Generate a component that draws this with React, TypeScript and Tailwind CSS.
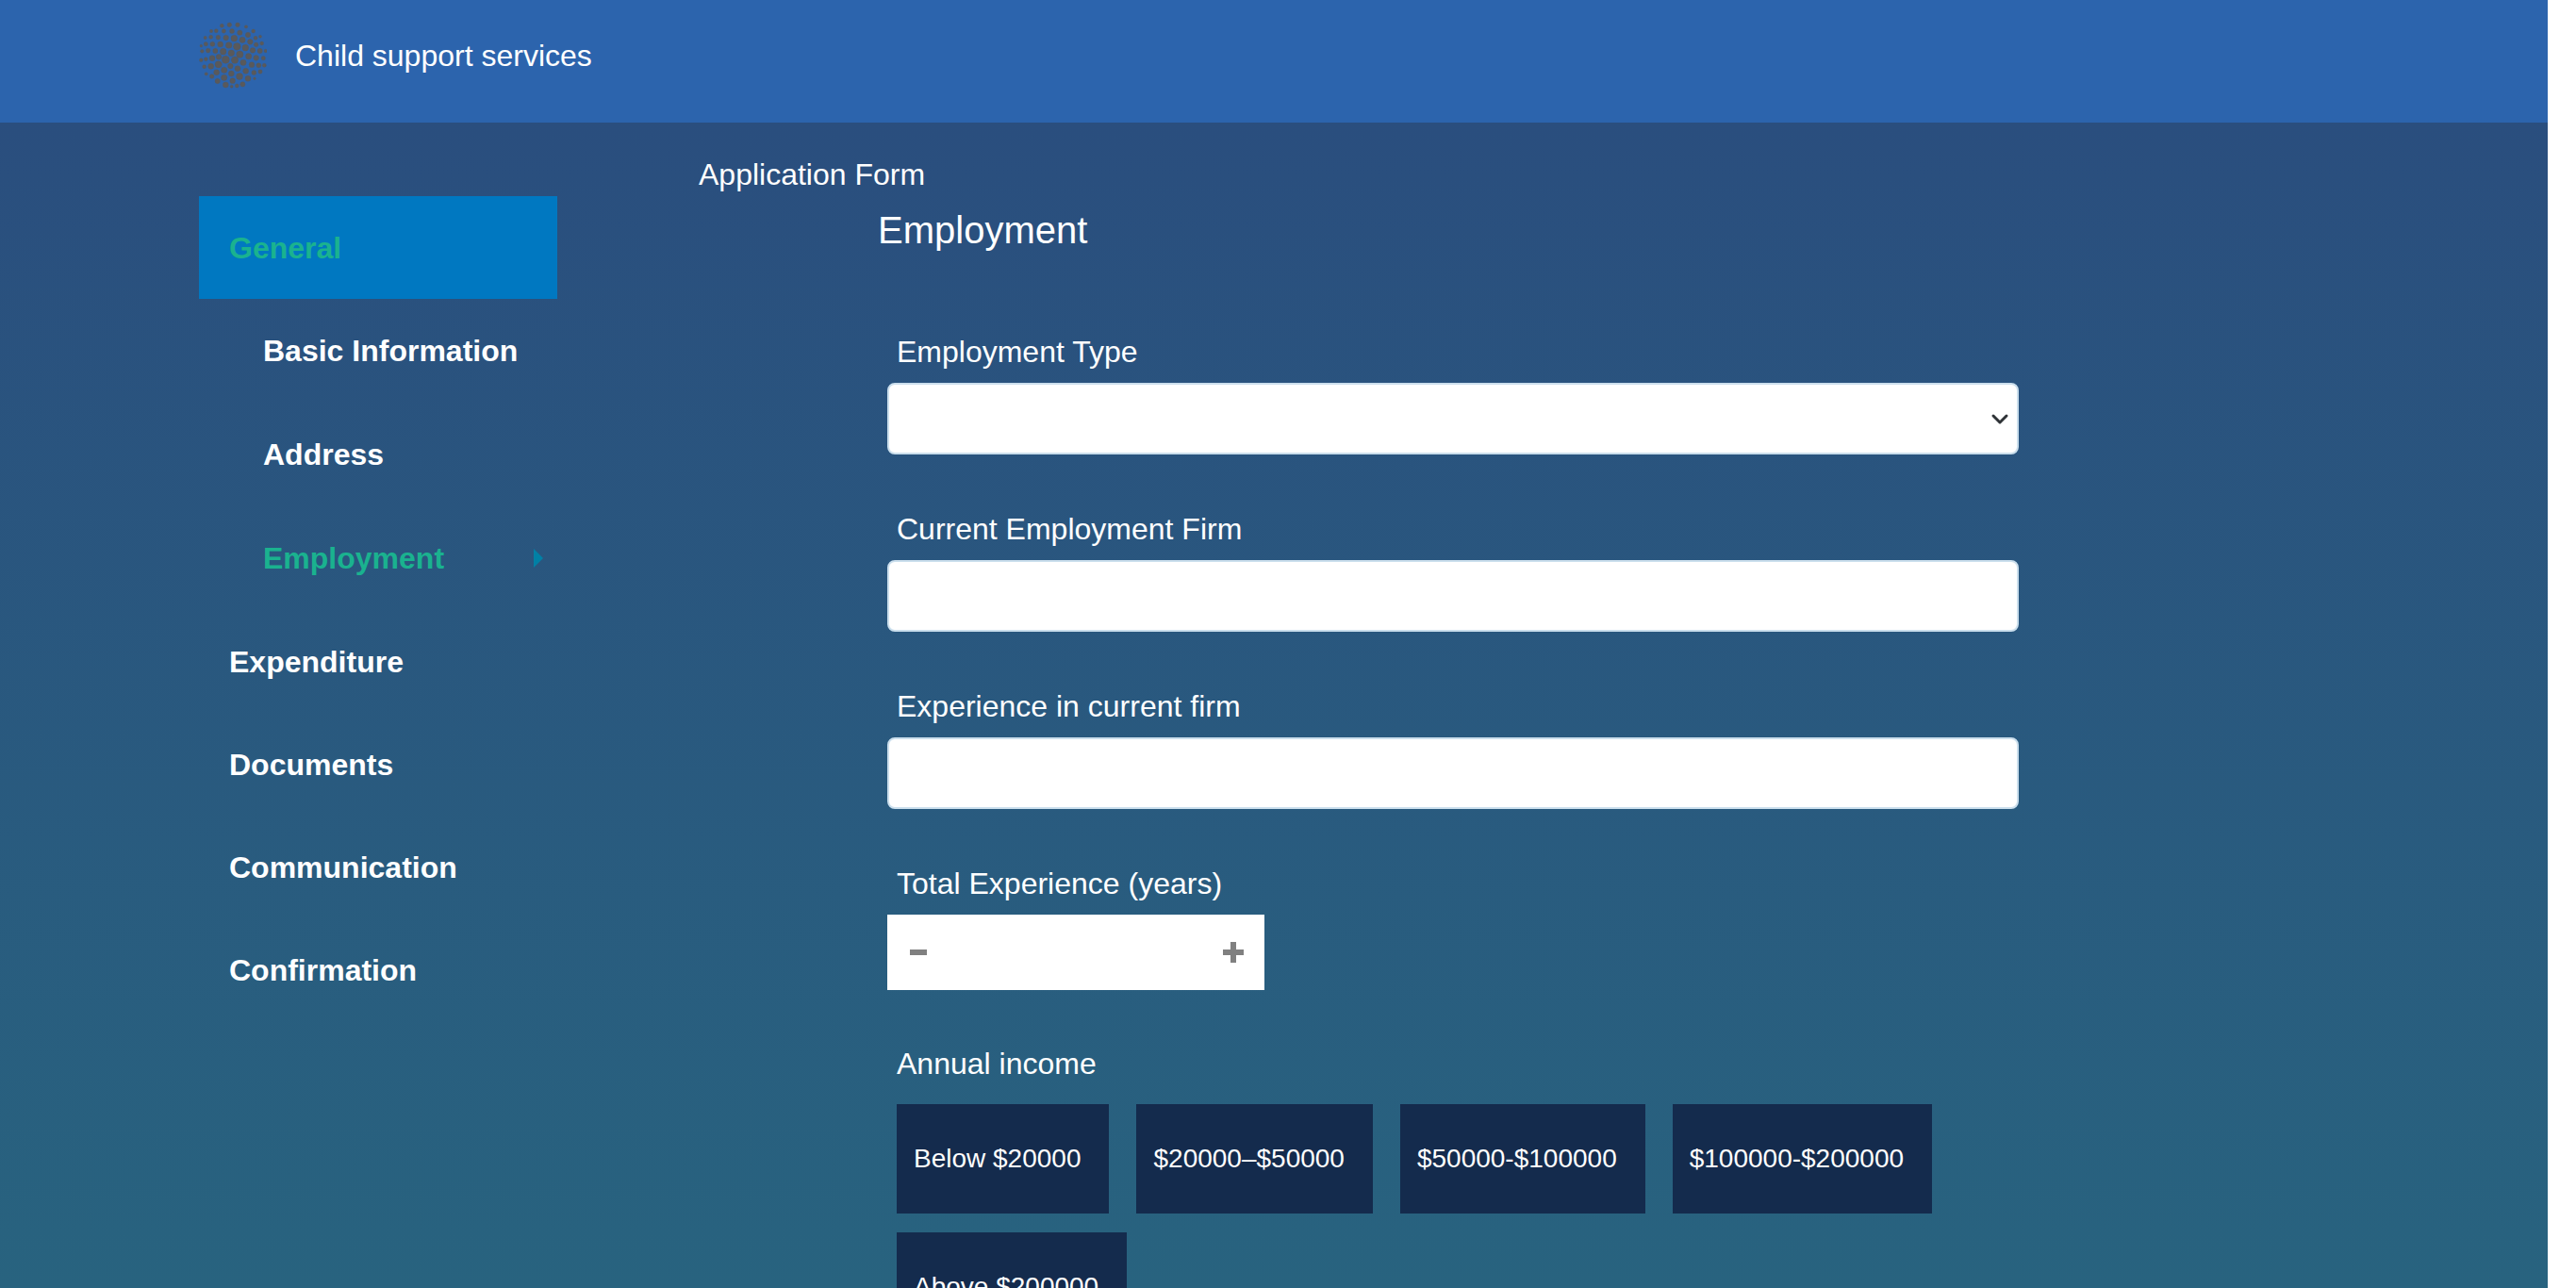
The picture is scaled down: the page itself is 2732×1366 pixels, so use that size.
import { useState } from "react";

const LOGO_DOTS: [number, number, number][] = [
  [106, 53, 6], [130, 50, 7], [156, 50, 7], [183, 56, 5],
  [72, 70, 5], [88, 69, 6], [112, 70, 6.5], [138, 70, 7.5], [163, 75, 8], [189, 82, 8], [206, 70, 6],
  [53, 91, 5], [71, 89, 6], [94, 90, 7], [119, 91, 8.5], [145, 93, 10], [171, 98, 9.5], [196, 104, 8.5], [213, 92, 6], [228, 87, 4.5],
  [40, 117, 4], [55, 111, 6.5], [76, 111, 7.5], [101, 112, 9], [128, 115, 10], [154, 119, 11.5], [181, 123, 10], [215, 113, 7], [233, 109, 6],
  [43, 134, 5.5], [62, 132, 7], [85, 133, 8], [110, 135, 10], [136, 140, 10], [163, 144, 11], [204, 131, 8.5], [227, 133, 8], [245, 133, 5],
  [40, 162, 5.5], [55, 159, 6], [75, 156, 9], [96, 152, 8.5], [118, 161, 12], [147, 162, 11], [191, 150, 9.5], [215, 155, 8.5], [238, 156, 6.5],
  [50, 183, 6], [71, 182, 9], [95, 176, 11], [133, 181, 8.5], [174, 170, 9.5], [201, 177, 8.5], [223, 179, 7.5], [241, 179, 6],
  [56, 206, 5], [89, 201, 9], [113, 194, 9.5], [136, 205, 9], [156, 189, 9], [182, 197, 9], [208, 202, 7.5], [228, 199, 6.5],
  [74, 214, 7], [92, 229, 8], [113, 218, 9.5], [140, 228, 8.5], [162, 214, 10.5], [189, 221, 9], [210, 221, 4],
  [118, 241, 9], [137, 246, 4.5], [154, 244, 6], [172, 239, 8],
];

function Logo() {
  return (
    <svg
      viewBox="33 40 216 213"
      className="h-[71px] w-[72px] shrink-0"
      fill="#59595b"
      stroke="#59595b"
      strokeWidth="1"
      aria-hidden="true"
    >
      {LOGO_DOTS.map(([x, y, r]) => (
        <circle key={`${x}-${y}`} cx={x} cy={y} r={r} />
      ))}
    </svg>
  );
}

const SECTIONS: { label: string; children?: string[] }[] = [
  { label: "General", children: ["Basic Information", "Address", "Employment"] },
  { label: "Expenditure" },
  { label: "Documents" },
  { label: "Communication" },
  { label: "Confirmation" },
];

const INCOMES = ["Below $20000", "$20000–$50000", "$50000-$100000", "$100000-$200000", "Above $200000"];

function Sidebar() {
  return (
    <nav className="mt-[78px] w-[380px] shrink-0 text-[32px] font-bold" aria-label="Form sections">
      <ul>
        {SECTIONS.map((section, i) => (
          <li key={section.label}>
            <a
              href="#"
              className={
                i === 0
                  ? "flex h-[109px] items-center bg-[#0078c1] px-8 text-[#1ab28f]"
                  : "flex h-[109px] items-center px-8"
              }
            >
              {section.label}
            </a>
            {section.children && (
              <ul>
                {section.children.map((child) => (
                  <li key={child}>
                    <a
                      href="#"
                      className={
                        child === "Employment"
                          ? "flex h-[110px] items-center justify-between pr-[15px] pl-[68px] text-[#1ab28f]"
                          : "flex h-[110px] items-center pl-[68px]"
                      }
                    >
                      {child}
                      {child === "Employment" && (
                        <svg viewBox="0 0 10 20" className="h-5 w-2.5" aria-hidden="true">
                          <path d="M0 0L10 10L0 20Z" fill="#0080a5" />
                        </svg>
                      )}
                    </a>
                  </li>
                ))}
              </ul>
            )}
          </li>
        ))}
      </ul>
    </nav>
  );
}

const controlClass =
  "h-[76px] w-full appearance-none rounded-lg border-2 border-[#cbdfed] bg-white px-4 text-[32px] text-[#303035]";
const labelClass = "block px-2.5 text-[32px] leading-[46px]";

export default function App() {
  const [years, setYears] = useState("");
  const [income, setIncome] = useState("");
  const step = (by: number) => setYears(String(Math.max(0, Number(years) + by)));

  return (
    <div className="flex h-screen overflow-hidden bg-white font-['Liberation_Sans',Arial,sans-serif] text-white">
      <div className="flex min-w-0 flex-1 flex-col">
        <header className="flex items-center gap-[30px] bg-[#2c64ad] px-[211px] pt-[23px] pb-9">
          <Logo />
          <span className="text-[32px]">Child support services</span>
        </header>

        <div className="flex min-h-0 flex-1 gap-[150px] overflow-hidden bg-linear-to-b from-[#2a4e7e] to-[#28637f] px-[211px]">
          <Sidebar />

          <main className="min-w-0 flex-1 pt-8">
            <h1 className="text-[32px] leading-[46px]">Application Form</h1>
            <h2 className="py-2 pl-[190px] text-[40px] leading-[56px]">Employment</h2>

            <form className="mt-[70px] ml-[200px] max-w-[1200px]" onSubmit={(e) => e.preventDefault()}>
              <div className="mb-14">
                <label htmlFor="type" className={labelClass}>Employment Type</label>
                <div className="relative mt-2.5">
                  <select id="type" className={controlClass} defaultValue="">
                    <option value=""></option>
                    <option>Full time</option>
                    <option>Part time</option>
                  </select>
                  <svg
                    viewBox="0 0 16 10"
                    className="pointer-events-none absolute top-[34px] right-3 h-2.5 w-4 overflow-visible"
                    fill="none"
                    stroke="#2f3337"
                    strokeWidth="3"
                    aria-hidden="true"
                  >
                    <path d="M1 1L8 8L15 1" strokeLinejoin="round" strokeLinecap="round" />
                  </svg>
                </div>
              </div>

              <div className="mb-14">
                <label htmlFor="firm" className={labelClass}>Current Employment Firm</label>
                <input id="firm" type="text" className={`mt-2.5 block ${controlClass}`} />
              </div>

              <div className="mb-14">
                <label htmlFor="experience" className={labelClass}>Experience in current firm</label>
                <input id="experience" type="text" className={`mt-2.5 block ${controlClass}`} />
              </div>

              <div className="mb-[55px]">
                <label htmlFor="years" className={labelClass}>Total Experience (years)</label>
                <div className="mt-2.5 flex h-20 w-[400px] bg-white">
                  <button type="button" aria-label="Decrease" className="flex items-center px-6" onClick={() => step(-1)}>
                    <svg viewBox="0 0 18 6" className="h-1.5 w-[18px]" aria-hidden="true">
                      <path d="M0 0H18V6H0Z" fill="#808080" />
                    </svg>
                  </button>
                  <input
                    id="years"
                    type="text"
                    inputMode="numeric"
                    className="min-w-0 flex-1 text-center text-[32px] text-[#303035]"
                    value={years}
                    onChange={(e) => setYears(e.target.value.replace(/\D/g, ""))}
                  />
                  <button type="button" aria-label="Increase" className="flex items-center px-[22px]" onClick={() => step(1)}>
                    <svg viewBox="0 0 22 22" className="size-[22px]" aria-hidden="true">
                      <path d="M8 0H14V8H22V14H14V22H8V14H0V8H8Z" fill="#808080" />
                    </svg>
                  </button>
                </div>
              </div>

              <div role="group" aria-labelledby="income">
                <p id="income" className={labelClass}>Annual income</p>
                <div className="mt-5 flex flex-wrap gap-x-[29px] gap-y-5 pl-2.5">
                  {INCOMES.map((label) => (
                    <button
                      key={label}
                      type="button"
                      aria-pressed={income === label}
                      onClick={() => setIncome(label)}
                      className="h-[116px] bg-[#142b4d] pr-[30px] pl-[18px] text-[28px] whitespace-nowrap"
                    >
                      {label}
                    </button>
                  ))}
                </div>
              </div>
            </form>
          </main>
        </div>
      </div>
      <div className="w-[30px] shrink-0 bg-white" />
    </div>
  );
}
